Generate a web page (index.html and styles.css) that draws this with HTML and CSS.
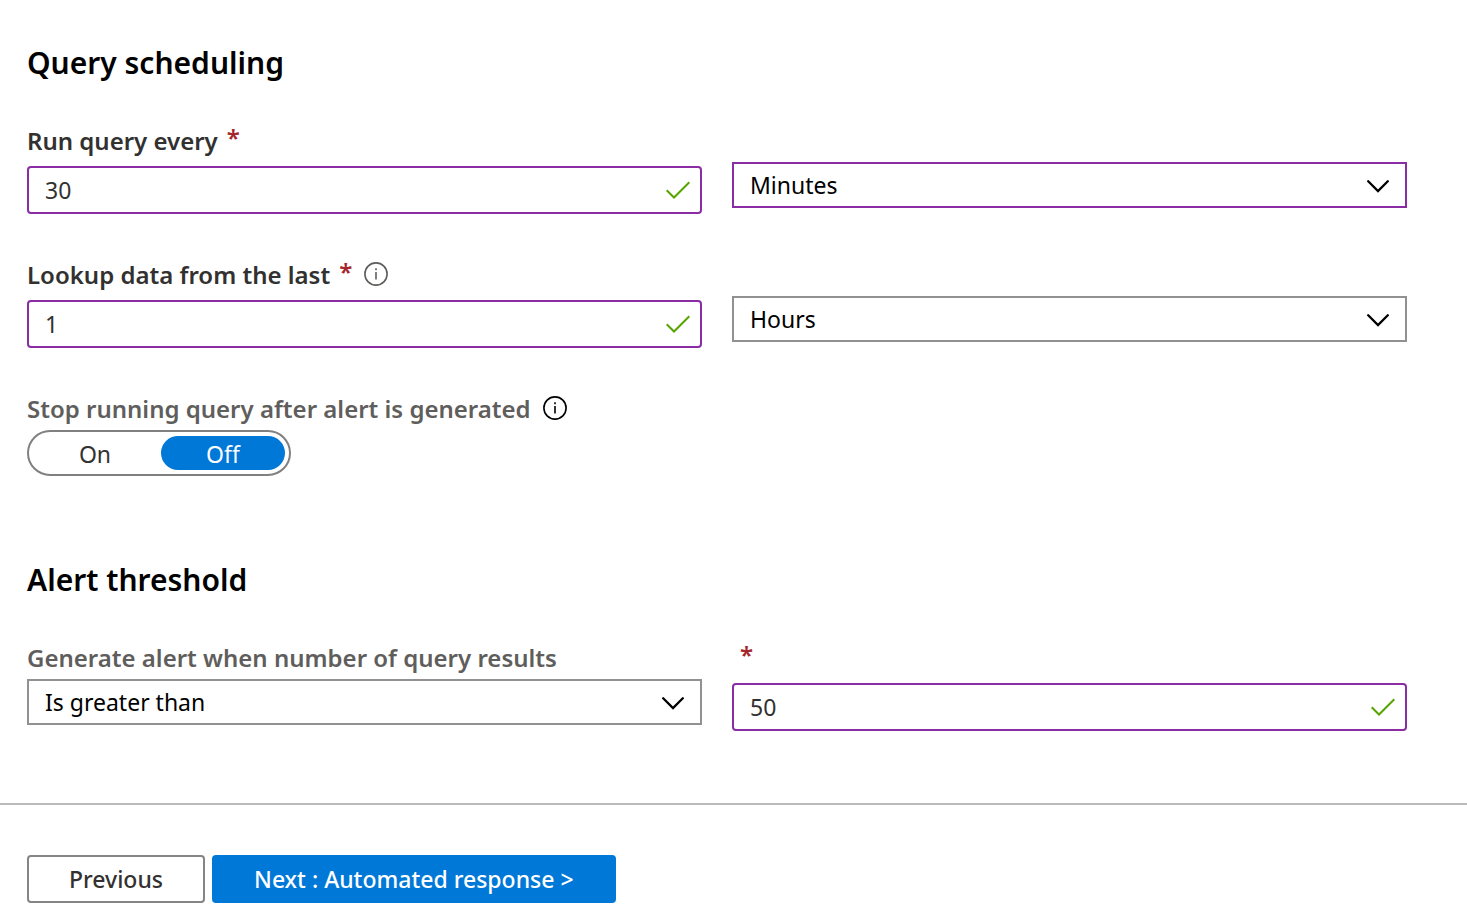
FILE: index.html
```html
<!DOCTYPE html>
<html lang="en">
<head>
<meta charset="utf-8">
<title>Query scheduling</title>
<link rel="stylesheet" href="styles.css">
</head>
<body>
<svg class="sprite" aria-hidden="true">
  <symbol id="check" viewBox="0 0 24 18"><path d="M.7 9.2 8 16.5 23.3 1.2" fill="none" stroke="currentColor" stroke-width="2"/></symbol>
  <symbol id="chevron" viewBox="0 0 22 14"><path d="M1.2 2.2 11 12 20.8 2.2" fill="none" stroke="currentColor" stroke-width="2.3" stroke-linecap="round"/></symbol>
  <symbol id="info" viewBox="0 0 24 24"><circle cx="12" cy="12" r="11.1" fill="none" stroke="currentColor" stroke-width="1.6"/><path d="M12 10v7.6M12 6.2v2" fill="none" stroke="currentColor" stroke-width="1.6"/></symbol>
</svg>
<form class="wizard">
  <main class="content">
    <section class="section">
      <h2 class="title">Query scheduling</h2>
      <div class="rows">
        <div class="row">
          <div class="field">
            <div class="caption"><label for="every">Run query every</label><span class="required">*</span></div>
            <div class="control text-control"><input class="text-box" id="every" type="text" value="30" required><svg class="check"><use href="#check"/></svg></div>
          </div>
          <div class="field">
            <div class="caption"></div>
            <div class="control"><select class="drop-down changed" aria-label="Run query every, unit"><option>Minutes</option><option>Hours</option><option>Days</option></select><svg class="chevron"><use href="#chevron"/></svg></div>
          </div>
        </div>
        <div class="row">
          <div class="field">
            <div class="caption"><label for="lookup">Lookup data from the last</label><span class="required">*</span><svg class="info"><use href="#info"/></svg></div>
            <div class="control text-control"><input class="text-box" id="lookup" type="text" value="1" required><svg class="check"><use href="#check"/></svg></div>
          </div>
          <div class="field">
            <div class="caption"></div>
            <div class="control"><select class="drop-down" aria-label="Lookup data, unit"><option>Hours</option><option>Minutes</option><option>Days</option></select><svg class="chevron"><use href="#chevron"/></svg></div>
          </div>
        </div>
        <div class="field">
          <div class="caption muted"><span id="stop-label">Stop running query after alert is generated</span><svg class="info dark"><use href="#info"/></svg></div>
          <div class="toggle" role="radiogroup" aria-labelledby="stop-label">
            <input class="choice" type="radio" name="stop" id="stop-on"><label class="segment" for="stop-on">On</label>
            <input class="choice" type="radio" name="stop" id="stop-off" checked><label class="segment" for="stop-off">Off</label>
          </div>
        </div>
      </div>
    </section>
    <section class="section">
      <h2 class="title">Alert threshold</h2>
      <div class="row">
        <div class="field">
          <div class="caption muted"><label for="operator">Generate alert when number of query results</label></div>
          <div class="control"><select class="drop-down" id="operator"><option>Is greater than</option><option>Is fewer than</option></select><svg class="chevron"><use href="#chevron"/></svg></div>
        </div>
        <div class="field">
          <div class="caption"><span class="required">*</span></div>
          <div class="control text-control"><input class="text-box" type="text" value="50" aria-label="Threshold" required><svg class="check"><use href="#check"/></svg></div>
        </div>
      </div>
    </section>
  </main>
  <footer class="footer">
    <button class="button" type="button">Previous</button>
    <button class="button primary" type="button">Next : Automated response &gt;</button>
  </footer>
</form>
</body>
</html>
```
FILE: styles.css
```css
* { box-sizing: border-box; }

body {
  margin: 0;
  background: #fff;
  color: #323130;
  font-family: "Segoe UI", "Noto Sans", sans-serif;
  font-size: 23px;
}

input, select, button { font: inherit; color: inherit; }

.sprite { position: absolute; width: 0; height: 0; }

.content {
  display: flex;
  flex-direction: column;
  gap: 82px;
  padding: 41px 60px 72px 27px;
}

.title {
  margin: 0 0 37px;
  color: #000;
  font-size: 30px;
  font-weight: 600;
  line-height: 44px;
}

.rows { display: flex; flex-direction: column; gap: 42px; }

.row {
  display: grid;
  grid-template-columns: 1fr 1fr;
  gap: 30px;
}

.caption {
  display: flex;
  align-items: center;
  gap: 9px;
  height: 40px;
  padding-bottom: 4px;
  font-size: 24px;
  font-weight: 600;
  white-space: nowrap;
}

.muted { color: #605e5c; }
.required { padding-bottom: 6px; color: #a4262c; }
.required:first-child { margin-left: 8px; }

.info { width: 24px; height: 24px; margin-left: 3px; color: #605e5c; }
.info.dark { color: #000; }

.control { position: relative; }
.text-control { padding-top: 4px; }

.text-box, .drop-down {
  display: block;
  width: 100%;
  padding: 0 50px 0 16px;
  border: 2px solid #8a2da5;
  background: #fff;
  outline: none;
}

.text-box { height: 48px; border-radius: 4px; }

.drop-down {
  height: 46px;
  border-color: #919191;
  border-radius: 0;
  color: #000;
  appearance: none;
}

.drop-down.changed { border-color: #8a2da5; }

.check, .chevron { position: absolute; pointer-events: none; }
.check { right: 12px; bottom: 15px; width: 24px; height: 18px; color: #57a300; }
.chevron { right: 18px; top: 17px; width: 22px; height: 14px; color: #000; }

.toggle {
  display: flex;
  gap: 4px;
  width: 264px;
  padding: 4px;
  border: 2px solid #808080;
  border-radius: 23px;
}

.choice { position: absolute; opacity: 0; }

.segment {
  flex: 1;
  height: 34px;
  border-radius: 17px;
  line-height: 36px;
  text-align: center;
}

.choice:checked + .segment { background: #0078d7; color: #fff; }

.footer {
  display: flex;
  gap: 7px;
  padding: 50px 27px 16px;
  border-top: 2px solid #bababa;
}

.button {
  height: 48px;
  padding: 0 40px;
  border: 2px solid #858585;
  border-radius: 4px;
  background: #fff;
  font-weight: 500;
}

.button.primary { border-color: #0078d7; background: #0078d7; color: #fff; }
```
